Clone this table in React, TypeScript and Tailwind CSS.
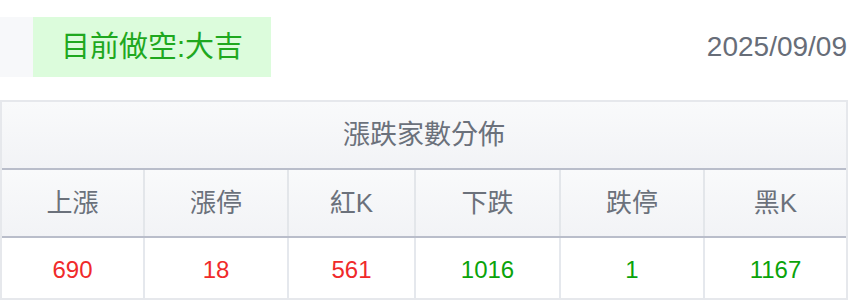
import React from 'react';

const headers = ['上漲', '漲停', '紅K', '下跌', '跌停', '黑K'];
const values: { v: string; up: boolean }[] = [
  { v: '690', up: true },
  { v: '18', up: true },
  { v: '561', up: true },
  { v: '1016', up: false },
  { v: '1', up: false },
  { v: '1167', up: false },
];

const cols = 'grid grid-cols-[143px_144px_127px_145px_144px_1fr]';

export default function App() {
  return (
    <div className="w-[864px] h-[302px] bg-white overflow-hidden font-['Liberation_Sans','Noto_Sans_CJK_TC',sans-serif]">
      <div className="flex items-center justify-between pt-[17px] pr-[17px]">
        <div className="flex h-[60px]">
          <div className="w-[33px] bg-[#f7f8fa]" />
          <div className="flex items-center px-[28px] bg-[#dcfcdc] text-[#1fa81f] text-[29px] leading-none">
            目前做空:大吉
          </div>
        </div>
        <div className="text-[28px] leading-none text-[#676d78]">2025/09/09</div>
      </div>

      <div className="mt-[23px] w-[848px] border-2 border-[#e6e8ec]">
        <div className="h-[68px] flex items-center justify-center bg-gradient-to-b from-[#f9fafb] to-[#f2f3f6] border-b-2 border-[#b9bdca] text-[27px] text-[#6b717b]">
          漲跌家數分佈
        </div>
        <div className={`${cols} h-[68px] border-b-2 border-[#b9bdca] bg-gradient-to-b from-[#f9fafb] to-[#f2f3f6]`}>
          {headers.map((h, i) => (
            <div
              key={h}
              className={`flex items-center justify-center text-[26px] text-[#6b717b] ${i < 5 ? 'border-r-2 border-[#e3e6ea]' : ''}`}
            >
              {h}
            </div>
          ))}
        </div>
        <div className={`${cols} h-[60px] bg-white`}>
          {values.map((c, i) => (
            <div
              key={i}
              className={`flex items-center justify-center pt-[3px] text-[24px] ${c.up ? 'text-[#f02a2a]' : 'text-[#0aa30a]'} ${i < 5 ? 'border-r-2 border-[#e5e8ed]' : ''}`}
            >
              {c.v}
            </div>
          ))}
        </div>
      </div>
    </div>
  );
}
